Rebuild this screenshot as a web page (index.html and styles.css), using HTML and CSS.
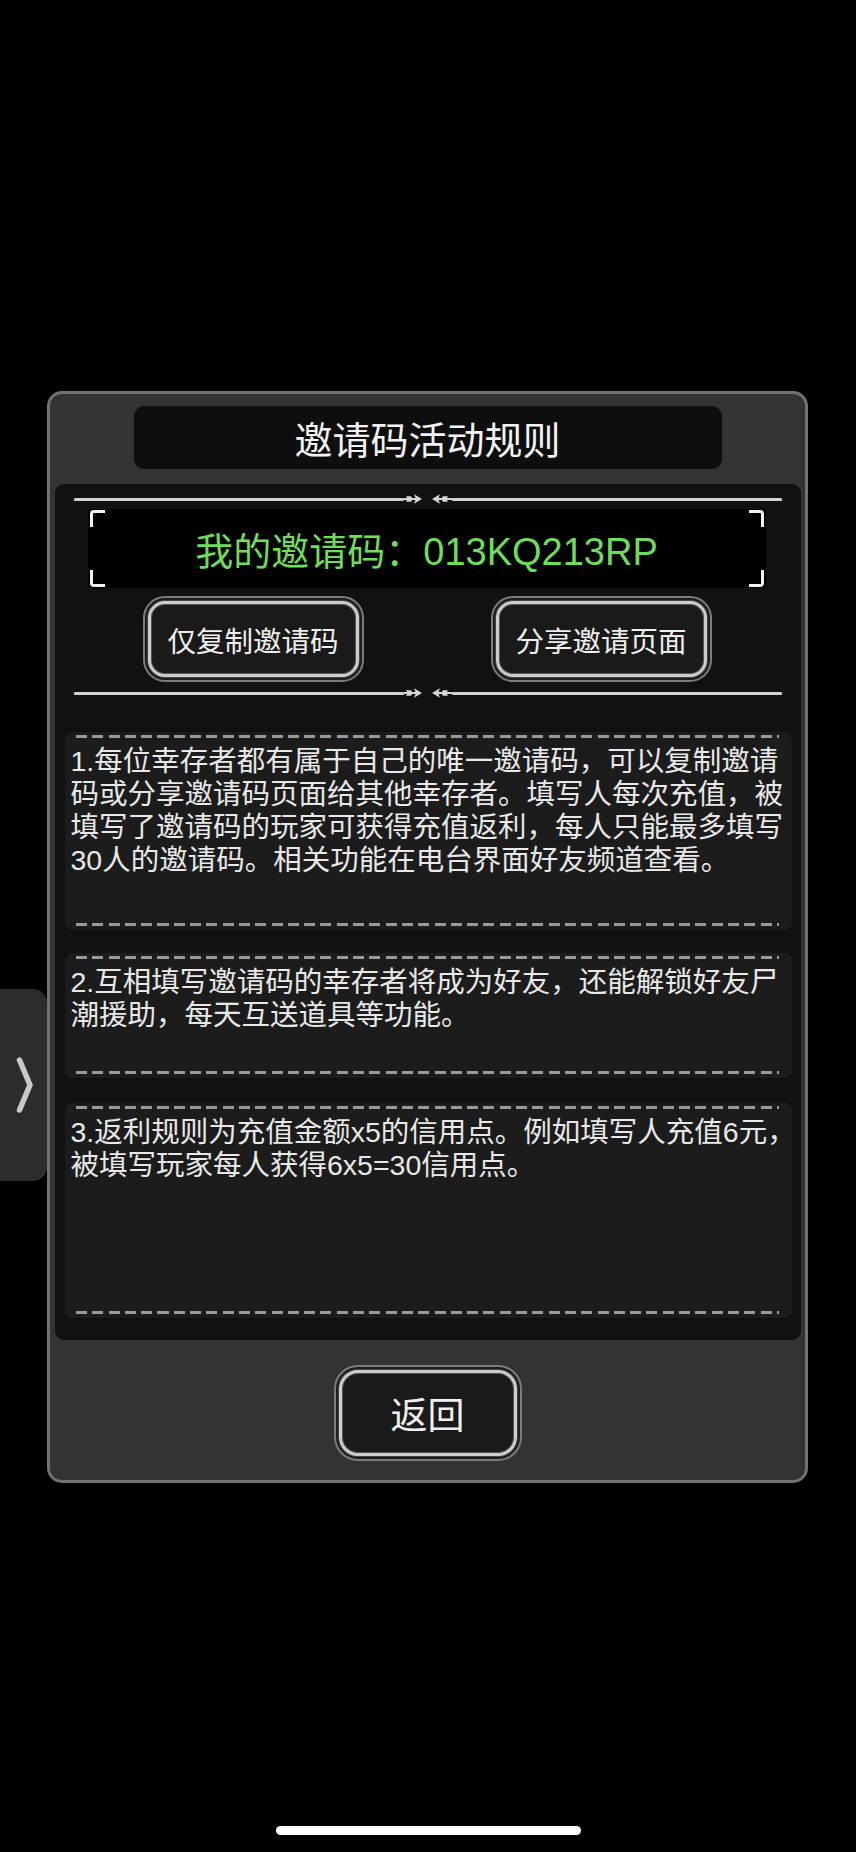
FILE: index.html
```html
<!DOCTYPE html>
<html lang="zh-CN">
<head>
<meta charset="utf-8">
<title>邀请码活动规则</title>
<link rel="stylesheet" href="styles.css">
</head>
<body>
<div class="screen">
  <aside class="side-tab">
    <svg class="side-tab__chevron" width="47" height="192" viewBox="0 0 47 192">
      <polyline points="19.5,71 30,96 19.5,121" fill="none" stroke="#c9c9c9" stroke-width="5.5" stroke-linecap="round" stroke-linejoin="round"/>
    </svg>
  </aside>

  <section class="panel">
    <header class="panel__title">邀请码活动规则</header>

    <div class="panel__body">
      <div class="divider">
        <span class="divider__line"></span>
        <svg class="divider__arrows" width="48" height="12" viewBox="0 0 48 12">
          <g fill="#d6d6d6">
            <path d="M-2 5H12V7H-2Z"/>
            <path d="M2 3.2H7L8.6 6L7 8.8H2L3.6 6Z"/>
            <path d="M10 1.2L18 6L10 10.8L11.8 6Z"/>
            <g transform="translate(46 0) scale(-1 1)">
              <path d="M-4 5H12V7H-4Z"/>
              <path d="M2 3.2H7L8.6 6L7 8.8H2L3.6 6Z"/>
              <path d="M10 1.2L18 6L10 10.8L11.8 6Z"/>
            </g>
          </g>
        </svg>
        <span class="divider__line"></span>
      </div>

      <div class="code-box">
        <span class="corner corner--tl"></span>
        <span class="corner corner--tr"></span>
        <span class="corner corner--bl"></span>
        <span class="corner corner--br"></span>
        <p class="code-box__text">我的邀请码：013KQ213RP</p>
      </div>

      <div class="actions">
        <button class="btn btn--small"><span class="btn__face">仅复制邀请码</span></button>
        <button class="btn btn--small"><span class="btn__face">分享邀请页面</span></button>
      </div>

      <div class="divider divider--lower">
        <span class="divider__line"></span>
        <svg class="divider__arrows" width="48" height="12" viewBox="0 0 48 12">
          <g fill="#d6d6d6">
            <path d="M-2 5H12V7H-2Z"/>
            <path d="M2 3.2H7L8.6 6L7 8.8H2L3.6 6Z"/>
            <path d="M10 1.2L18 6L10 10.8L11.8 6Z"/>
            <g transform="translate(46 0) scale(-1 1)">
              <path d="M-4 5H12V7H-4Z"/>
              <path d="M2 3.2H7L8.6 6L7 8.8H2L3.6 6Z"/>
              <path d="M10 1.2L18 6L10 10.8L11.8 6Z"/>
            </g>
          </g>
        </svg>
        <span class="divider__line"></span>
      </div>

      <article class="rule rule--first">
        <p class="rule__text">1.每位幸存者都有属于自己的唯一邀请码，可以复制邀请<br>码或分享邀请码页面给其他幸存者。填写人每次充值，被<br>填写了邀请码的玩家可获得充值返利，每人只能最多填写<br>30人的邀请码。相关功能在电台界面好友频道查看。</p>
      </article>

      <article class="rule rule--second">
        <p class="rule__text">2.互相填写邀请码的幸存者将成为好友，还能解锁好友尸<br>潮援助，每天互送道具等功能。</p>
      </article>

      <article class="rule rule--third">
        <p class="rule__text">3.返利规则为充值金额x5的信用点。例如填写人充值6元，<br>被填写玩家每人获得6x5=30信用点。</p>
      </article>
    </div>

    <footer class="panel__footer">
      <button class="btn btn--large"><span class="btn__face">返回</span></button>
    </footer>
  </section>

  <div class="home-indicator"></div>
</div>
</body>
</html>
```

FILE: styles.css
```css
* {
  box-sizing: border-box;
}

html, body {
  margin: 0;
  padding: 0;
  background: #000;
}

body {
  font-family: "Liberation Sans", "Noto Sans CJK SC", sans-serif;
  color: #ececec;
}

.screen {
  position: relative;
  width: 856px;
  height: 1852px;
  display: flex;
  flex-direction: column;
  overflow: hidden;
  background: #000;
}

/* left pull-out tab */
.side-tab {
  position: absolute;
  left: 0;
  top: 989px;
  width: 47px;
  height: 192px;
  background: #2c2c2c;
  border-radius: 0 14px 14px 0;
}

.side-tab__chevron {
  display: block;
}

/* main dialog panel */
.panel {
  margin: 391px 0 0 47px;
  width: 761px;
  height: 1092px;
  background: #333333;
  border: 3px solid #727272;
  border-radius: 15px;
  padding-top: 12px;
  display: flex;
  flex-direction: column;
  align-items: center;
}

.panel__title {
  width: 588px;
  height: 63px;
  background: #0e0e0e;
  border-radius: 10px;
  display: flex;
  align-items: center;
  justify-content: center;
  font-size: 38px;
  color: #f4f4f4;
}

.panel__body {
  margin-top: 15px;
  width: 746px;
  height: 856px;
  background: #111111;
  border-radius: 9px;
  display: flex;
  flex-direction: column;
  padding-top: 9px;
}

/* ornament divider */
.divider {
  display: flex;
  align-items: center;
  height: 12px;
  margin: 0 19px;
  flex: none;
}

.divider--lower {
  margin-top: 5px;
}

.divider__line {
  flex: 1;
  height: 3px;
  background: #d2d2d2;
  border-radius: 1px;
}

.divider__arrows {
  display: block;
  flex: none;
}

/* invite code box */
.code-box {
  position: relative;
  margin: 4px 35px 0 33px;
  height: 79px;
  flex: none;
  background: #000;
  display: flex;
  align-items: center;
  justify-content: center;
}

.code-box__text {
  margin: 0;
  font-size: 38px;
  color: #6fdc5c;
  white-space: nowrap;
}

.corner {
  position: absolute;
  width: 15px;
  height: 17px;
  border: 0 solid #f2f2f2;
}

.corner--tl {
  top: 1px;
  left: 2px;
  border-top-width: 3px;
  border-left-width: 3px;
  border-top-left-radius: 4px;
}

.corner--tr {
  top: 1px;
  right: 2px;
  border-top-width: 3px;
  border-right-width: 3px;
  border-top-right-radius: 4px;
}

.corner--bl {
  bottom: 1px;
  left: 2px;
  border-bottom-width: 3px;
  border-left-width: 3px;
  border-bottom-left-radius: 4px;
}

.corner--br {
  bottom: 1px;
  right: 2px;
  border-bottom-width: 3px;
  border-right-width: 3px;
  border-bottom-right-radius: 4px;
}

/* buttons */
.actions {
  display: flex;
  justify-content: space-between;
  margin: 8px 89px 0 88px;
  height: 86px;
  flex: none;
}

.btn {
  font-family: inherit;
  color: #f0f0f0;
  margin: 0;
  background: #1c1c1c;
  border: 2px solid #7c7c7c;
  border-radius: 22px;
  padding: 3px;
  cursor: pointer;
  display: flex;
}

.btn__face {
  flex: 1;
  display: flex;
  align-items: center;
  justify-content: center;
  border: 3px solid #cdcdcd;
  border-radius: 17px;
  background: #1a1a1a;
  box-shadow: inset 0 0 0 1px #555, 0 0 0 1px #444;
  white-space: nowrap;
}

.btn--small {
  width: 221px;
  height: 86px;
  font-size: 28.5px;
}

.btn--large {
  width: 188px;
  height: 96px;
  font-size: 37px;
  border-radius: 24px;
}

.btn--large .btn__face {
  border-radius: 19px;
}

/* rule sections */
.rule {
  margin: 0 9px 0 10px;
  background: #1c1c1c;
  border-radius: 8px;
  display: flex;
  flex-direction: column;
  padding: 3px 0 4px;
  flex: none;
}

.rule::before,
.rule::after {
  content: "";
  display: block;
  height: 3px;
  margin: 0 13px 0 11px;
  background: repeating-linear-gradient(90deg, #9a9a9a 0 11px, transparent 11px 16.3px);
}

.rule__text {
  flex: 1;
  margin: 7px 0 0;
  padding-left: 6px;
  font-size: 28.5px;
  line-height: 33px;
  color: #e9e9e9;
  white-space: nowrap;
}

.rule--first {
  margin-top: 33px;
  height: 198px;
}

.rule--second {
  margin-top: 23px;
  height: 125px;
}

.rule--third {
  margin-top: 25px;
  height: 215px;
}

.panel__footer {
  margin-top: 25px;
  display: flex;
  justify-content: center;
}

/* iOS home indicator */
.home-indicator {
  margin-top: auto;
  margin-bottom: 17px;
  align-self: center;
  width: 305px;
  height: 9px;
  border-radius: 5px;
  background: #fff;
}
```
